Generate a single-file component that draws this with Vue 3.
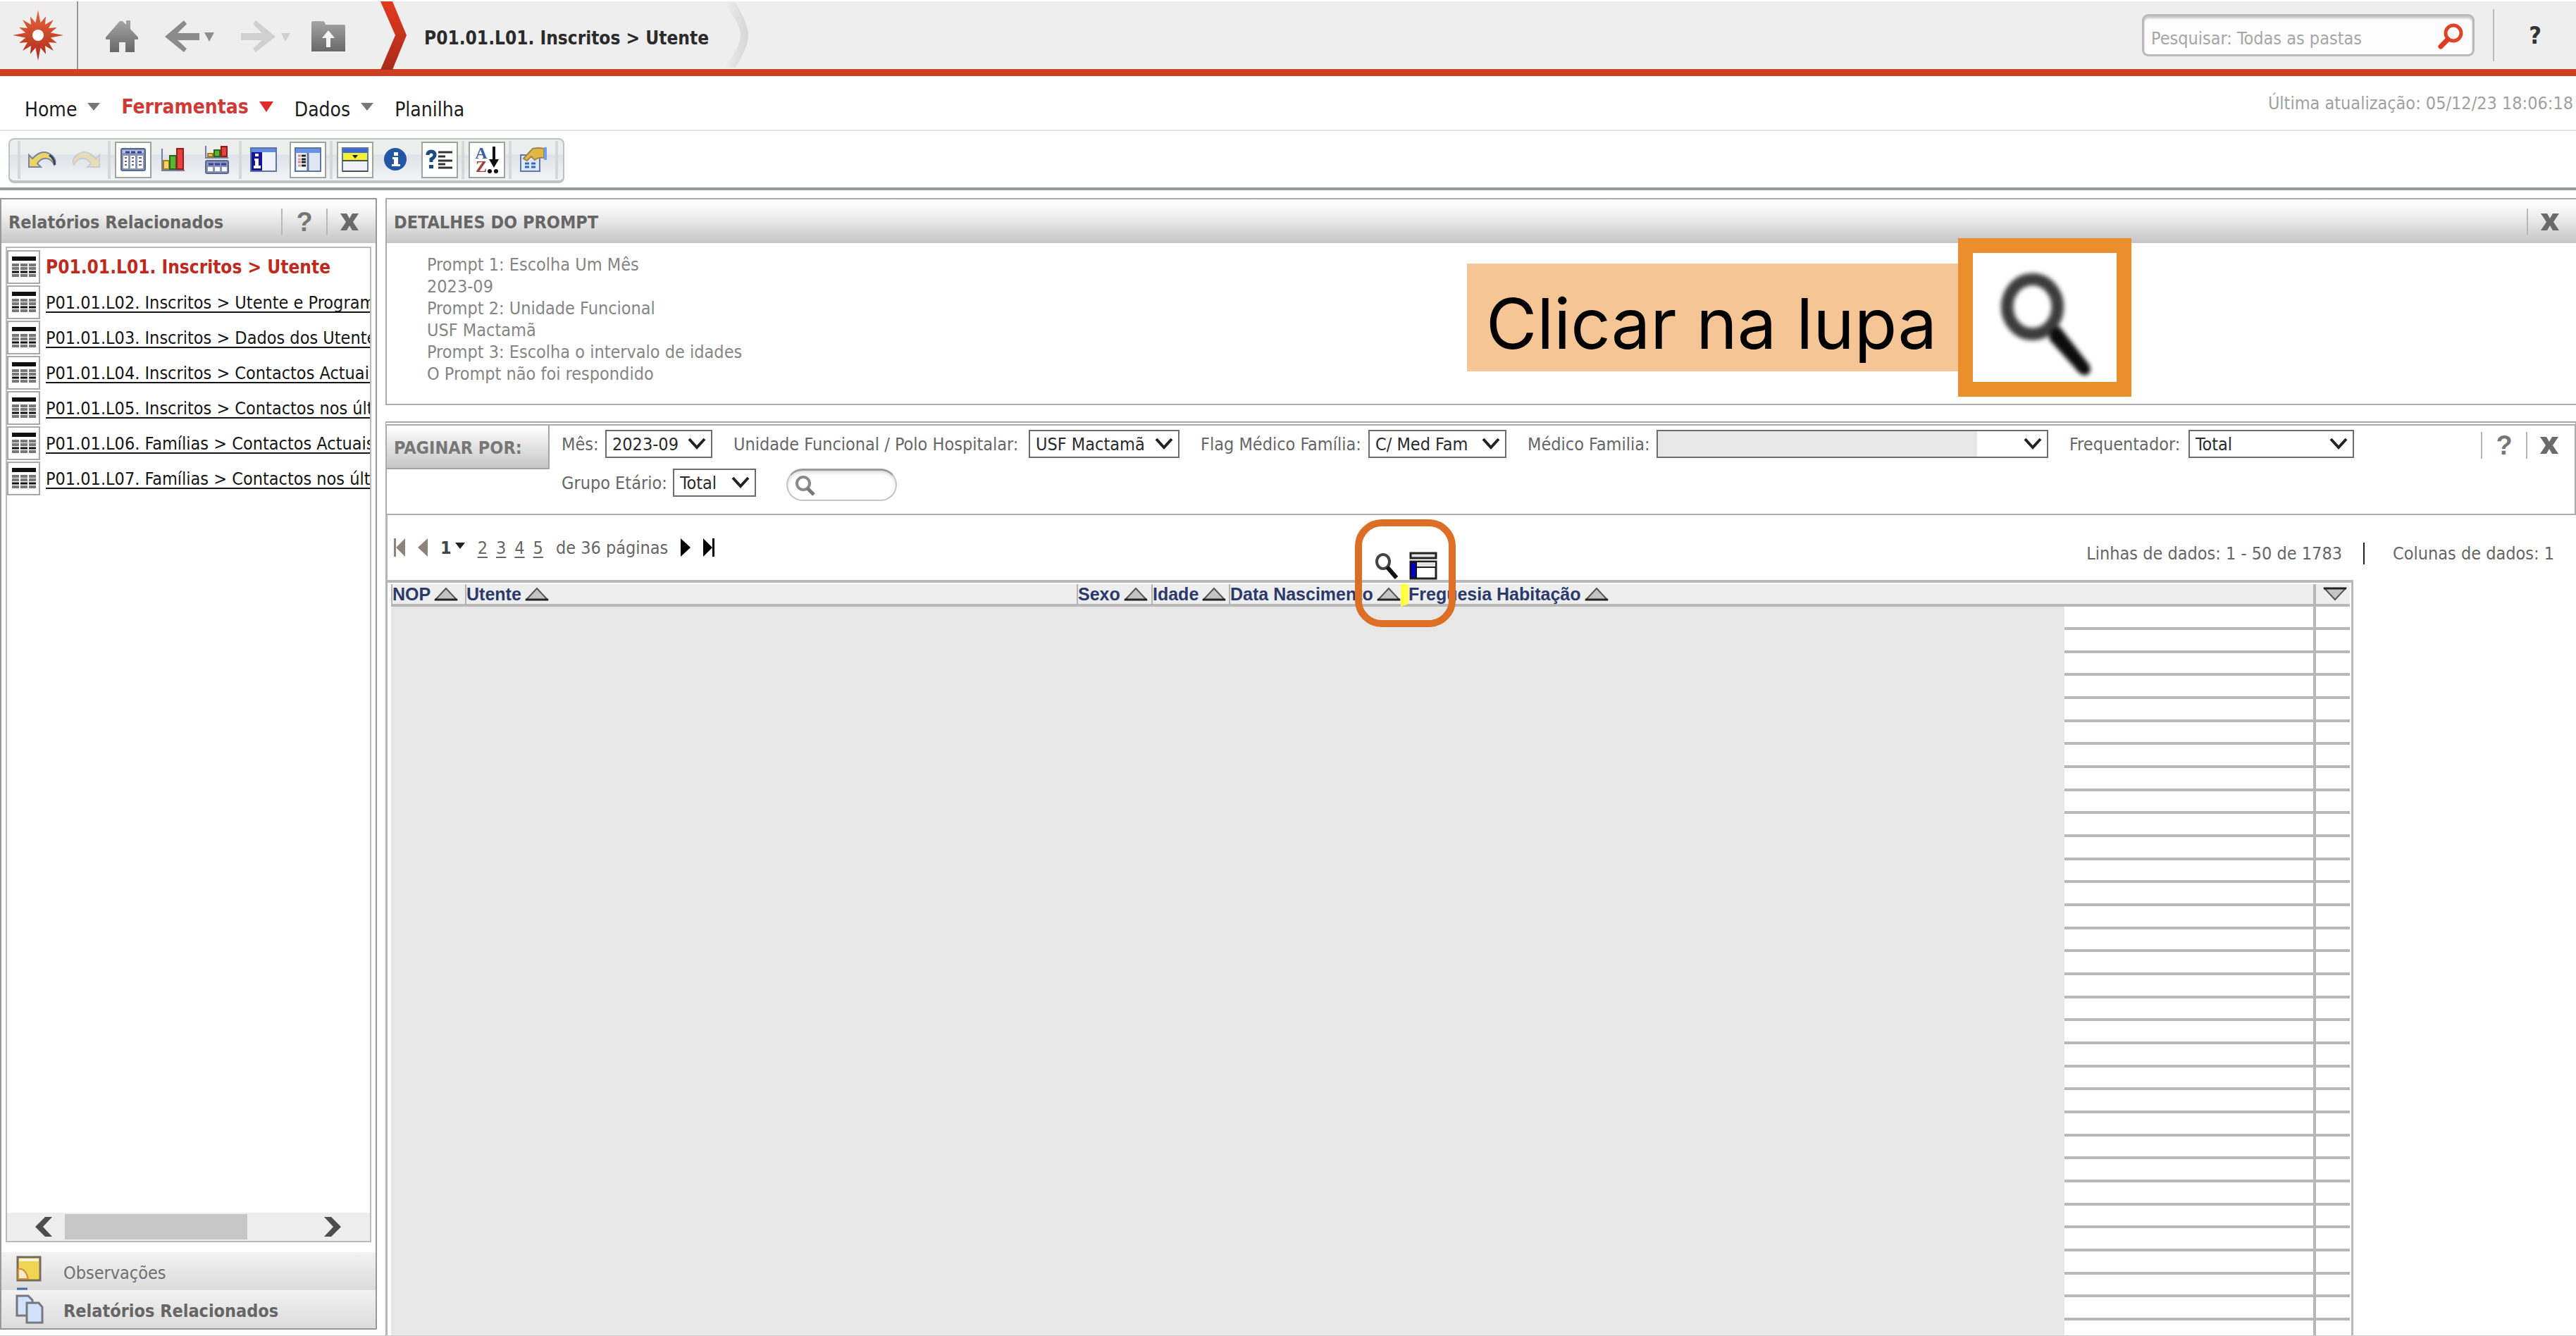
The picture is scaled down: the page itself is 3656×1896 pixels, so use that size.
<script setup>
import { ref } from 'vue'

const reports = [
  'P01.01.L01. Inscritos > Utente',
  'P01.01.L02. Inscritos > Utente e Programas',
  'P01.01.L03. Inscritos > Dados dos Utentes',
  'P01.01.L04. Inscritos > Contactos Actuais',
  'P01.01.L05. Inscritos > Contactos nos últimos',
  'P01.01.L06. Famílias > Contactos Actuais',
  'P01.01.L07. Famílias > Contactos nos últimos'
]

const prompts = [
  ['Prompt 1: Escolha Um Mês', '2023-09'],
  ['Prompt 2: Unidade Funcional', 'USF Mactamã'],
  ['Prompt 3: Escolha o intervalo de idades', 'O Prompt não foi respondido']
]

const fields = [
  { id: 'mes', label: 'Mês:', value: '2023-09', width: 152, span: 214 },
  { id: 'unidade', label: 'Unidade Funcional / Polo Hospitalar:', value: 'USF Mactamã', width: 214, span: 633 },
  { id: 'flag', label: 'Flag Médico Família:', value: 'C/ Med Fam', width: 196, span: 434 },
  { id: 'medico', label: 'Médico Familia:', value: '', width: 556, span: 739 },
  { id: 'frequentador', label: 'Frequentador:', value: 'Total', width: 235, span: 404 }
]
const ageField = { id: 'grupo', label: 'Grupo Etário:', value: 'Total', width: 118, span: 276 }

const columns = ['NOP', 'Utente', 'Sexo', 'Idade', 'Data Nascimento', 'Freguesia Habitação']
const rowCount = 32
const folderSearch = ref('')
const pageSearch = ref('')

const starPoints = Array.from({ length: 32 }, (_, i) => {
  const r = i % 2 ? 18 : i % 8 === 0 ? 36 : i % 4 === 0 ? 31 : 29
  const a = (Math.PI * i) / 16
  return `${(36 + r * Math.sin(a)).toFixed(1)},${(36 - r * Math.cos(a)).toFixed(1)}`
}).join(' ')
</script>

<template>
  <div class="page">
    <header class="topbar">
      <a class="logo" href="#" aria-label="Início">
        <svg width="72" height="72" viewBox="0 0 72 72">
          <defs>
            <linearGradient id="star" x1="0" y1="0" x2="0" y2="1">
              <stop offset="0" stop-color="#e8663a" />
              <stop offset="1" stop-color="#ab2a1c" />
            </linearGradient>
          </defs>
          <polygon :points="starPoints" fill="url(#star)" />
          <circle cx="36" cy="36" r="8" fill="#fff" />
        </svg>
      </a>
      <nav class="nav">
        <button class="plain" aria-label="Home">
          <svg width="48" height="48" viewBox="0 0 48 48">
            <defs>
              <linearGradient id="steel" x1="0" y1="0" x2="0" y2="1">
                <stop offset="0" stop-color="#a5a5a5" />
                <stop offset="1" stop-color="#686868" />
              </linearGradient>
            </defs>
            <path d="M1 25 20 3q3-3 6 0l4 4V1h6v12l11 12v3h-5v18H29V32h-9v14H7V28H1z" fill="url(#steel)" />
          </svg>
        </button>
        <button class="plain split" aria-label="Voltar">
          <svg width="72" height="48" viewBox="0 0 72 48">
            <path d="M28 1 1 24l27 22 4-5-13-12h31V19H19L32 6z" fill="#8b8b8b" />
            <path d="M57 18h14l-7 13z" fill="#8f8f8f" />
          </svg>
        </button>
        <button class="plain split" aria-label="Avançar">
          <svg width="72" height="48" viewBox="0 0 72 48">
            <path d="M22 1l28 23-28 22-4-5 13-12H1V19h30L18 6z" fill="#d0d0d0" />
            <path d="M58 19h13l-7 12z" fill="#cfcfcf" />
          </svg>
        </button>
        <button class="plain" aria-label="Pasta acima">
          <svg width="50" height="46" viewBox="0 0 50 46">
            <path d="M1 3q0-2 3-2h13q3 0 4 5h26q2 0 2 3v35H1z" fill="url(#steel)" />
            <path d="M25 14 16 25h6v13h6V25h6z" fill="#f4f4f4" />
          </svg>
        </button>
      </nav>
      <svg class="chevron" width="38" height="98" viewBox="0 0 38 98">
        <defs>
          <linearGradient id="hot" x1="0" y1="0" x2="0" y2="1">
            <stop offset="0" stop-color="#e23a1e" />
            <stop offset="1" stop-color="#a92b1b" />
          </linearGradient>
        </defs>
        <path d="M0 1h17l20 48-20 49H0l21-49z" fill="url(#hot)" />
      </svg>
      <h1>P01.01.L01. Inscritos &gt; Utente</h1>
      <svg width="36" height="94" viewBox="0 0 36 94">
        <defs>
          <linearGradient id="pale" x1="0" y1="0" x2="1" y2="0">
            <stop offset="0" stop-color="#eee" />
            <stop offset="1" stop-color="#d6d6d6" />
          </linearGradient>
        </defs>
        <path d="M0 1h17q18 30 18 46T17 93H0q24-30 24-46T0 1z" fill="url(#pale)" />
      </svg>
      <div class="search">
        <input v-model="folderSearch" type="text" placeholder="Pesquisar: Todas as pastas" aria-label="Pesquisar" />
        <button class="plain" aria-label="Procurar">
          <svg width="38" height="38" viewBox="0 0 38 38">
            <circle cx="23" cy="14" r="11" fill="none" stroke="#e04428" stroke-width="5" />
            <path d="M15 23 5 33" stroke="#de3a20" stroke-width="7" stroke-linecap="round" />
          </svg>
        </button>
      </div>
      <button class="help plain">?</button>
    </header>

    <div class="menubar">
      <nav class="menu">
        <a href="#">Home<svg width="18" height="11" viewBox="0 0 18 11"><path d="M0 0h18L9 11z" fill="#777" /></svg></a>
        <a href="#" class="active">Ferramentas<svg width="20" height="15" viewBox="0 0 20 15"><path d="M0 0h20L10 15z" fill="#e02b2b" /></svg></a>
        <a href="#">Dados<svg width="18" height="11" viewBox="0 0 18 11"><path d="M0 0h18L9 11z" fill="#777" /></svg></a>
        <a href="#">Planilha</a>
      </nav>
      <p class="updated">Última atualização: 05/12/23 18:06:18</p>
    </div>

    <div class="toolstrip">
      <div class="tools">
        <span class="bar"></span>
        <button class="tool" aria-label="Desfazer">
          <svg width="40" height="26" viewBox="0 0 40 26">
            <path d="M1 6v17h17l-5-5q6-9 14-7 6 1 10 9 4-6-3-13Q26 0 17 3 12 5 6 11z" fill="#ecd468" stroke="#7a86a0" stroke-width="2" />
            <path d="M30 6q7 5 8 14" stroke="#34455f" stroke-width="3" fill="none" />
          </svg>
        </button>
        <button class="tool" aria-label="Refazer">
          <svg width="40" height="26" viewBox="0 0 40 26" opacity=".45">
            <path d="M39 6v17H22l5-5q-6-9-14-7-6 1-10 9-4-6 3-13Q14 0 23 3q5 2 11 8z" fill="#ecd170" stroke="#a9aeb9" stroke-width="2" />
          </svg>
        </button>
        <span class="bar"></span>
        <button class="tool boxed" aria-label="Grade">
          <svg width="36" height="34" viewBox="0 0 36 34">
            <rect x="1" y="1" width="34" height="31" rx="2" fill="#8795b2" stroke="#566a91" stroke-width="2" />
            <path d="M3 3h30v4H3z" fill="#b8c3d6" />
            <path d="M7 6h6M15 6h6M24 6h6" stroke="#3b3ba5" stroke-width="3" />
            <path d="M4 11h7v18H4zM14 11h7v18h-7zM24 11h8v18h-8z" fill="#fff" />
            <path d="M6 14h3M6 19h3M6 24h3M16 14h3M16 19h3M16 24h3M26 14h4M26 19h4M26 24h4" stroke="#667" stroke-width="2" />
          </svg>
        </button>
        <button class="tool" aria-label="Gráfico">
          <svg width="36" height="34" viewBox="0 0 36 34">
            <path d="M2 1v31h32" stroke="#6f80a8" stroke-width="2" fill="none" />
            <rect x="4" y="18" width="8" height="12" fill="#f3d568" stroke="#a97b13" stroke-width="2" />
            <rect x="13" y="11" width="9" height="19" fill="#5cb336" stroke="#276a14" stroke-width="2" />
            <rect x="23" y="1" width="9" height="29" fill="#e2433c" stroke="#9c1a1a" stroke-width="2" />
          </svg>
        </button>
        <button class="tool" aria-label="Grade e gráfico">
          <svg width="36" height="42" viewBox="0 0 36 42">
            <path d="M2 1v17h32" stroke="#6f80a8" stroke-width="2" fill="none" />
            <rect x="5" y="12" width="7" height="4" fill="#f3d568" stroke="#a97b13" stroke-width="2" />
            <rect x="14" y="7" width="8" height="9" fill="#5cb336" stroke="#276a14" stroke-width="2" />
            <rect x="24" y="2" width="8" height="14" fill="#e2433c" stroke="#9c1a1a" stroke-width="2" />
            <rect x="2" y="22" width="32" height="18" rx="2" fill="#8795b2" stroke="#566a91" stroke-width="2" />
            <path d="M6 27h7M15 27h7M24 27h7" stroke="#3b3ba5" stroke-width="3" />
            <path d="M5 31h7v6H5zM15 31h7v6h-7zM25 31h7v6h-7z" fill="#fff" />
          </svg>
        </button>
        <span class="bar"></span>
        <button class="tool" aria-label="Detalhes do relatório">
          <svg width="38" height="36" viewBox="0 0 38 36">
            <rect x="1" y="1" width="36" height="33" fill="#eef2fa" stroke="#5d76a3" stroke-width="2" />
            <path d="M2 2h34v5H2z" fill="#5f8be0" />
            <path d="M2 7h15v26H2z" fill="#14149a" />
            <path d="M7 9h5v4H7zM6 16h6v10h3v4H5v-4h2v-7H6z" fill="#fff" />
          </svg>
        </button>
        <button class="tool boxed" aria-label="Lista de objetos">
          <svg width="38" height="36" viewBox="0 0 38 36">
            <rect x="1" y="1" width="36" height="33" fill="#dfe7f5" stroke="#5d76a3" stroke-width="2" />
            <path d="M2 2h34v6H2z" fill="#6b93e3" />
            <path d="M4 9h14v23H4z" fill="#fff" />
            <path d="M19 8v25" stroke="#5d76a3" stroke-width="3" />
            <path d="M5 12h4M5 21h4" stroke="#e57e7e" stroke-width="3" />
            <path d="M5 17h4M5 26h4" stroke="#c9a0a0" stroke-width="3" />
            <path d="M10 12h6M10 17h6M10 21h6M10 26h6" stroke="#222" stroke-width="3" />
          </svg>
        </button>
        <span class="bar"></span>
        <button class="tool boxed" aria-label="Paginar por">
          <svg width="38" height="36" viewBox="0 0 38 36">
            <rect x="1" y="1" width="36" height="33" fill="#eef1f8" stroke="#5d76a3" stroke-width="2" />
            <path d="M2 2h34v6H2z" fill="#3f68d4" />
            <path d="M2 8h34v10H2z" fill="#f5f032" />
            <path d="M15 11h8l-4 5z" fill="#222" />
            <path d="M1 19h36M1 34h36" stroke="#4b4f58" stroke-width="2" />
          </svg>
        </button>
        <button class="tool" aria-label="Informação">
          <svg width="36" height="36" viewBox="0 0 36 36">
            <circle cx="18" cy="17" r="16" fill="#2456a6" />
            <path d="M16 7h6v5h-6zM14 14h8v10h3v3H13v-3h3v-7h-2z" fill="#fff" />
          </svg>
        </button>
        <button class="tool boxed" aria-label="Detalhes do prompt">
          <svg width="40" height="30" viewBox="0 0 40 30">
            <path d="M3 8q0-5 5-5t5 5q0 3-5 6v4" stroke="#1b4a80" stroke-width="5" fill="none" />
            <path d="M5 22h6v5H5z" fill="#1b4a80" />
            <path d="M18 4h20M18 10h10M18 16h20M18 21h10M18 26h20" stroke="#333" stroke-width="3" />
          </svg>
        </button>
        <span class="bar"></span>
        <button class="tool boxed" aria-label="Ordenar">
          <span class="az" aria-hidden="true"><b>A</b><b>Z</b></span>
          <svg width="16" height="40" viewBox="0 0 16 40">
            <path d="M9 1v24" stroke="#111" stroke-width="4" />
            <path d="M2 19h14L9 31z" fill="#111" />
            <circle cx="3" cy="36" r="3" fill="#111" />
            <circle cx="12" cy="36" r="3" fill="#111" />
          </svg>
        </button>
        <span class="bar"></span>
        <button class="tool" aria-label="Opções do relatório">
          <svg width="40" height="36" viewBox="0 0 40 36">
            <rect x="2" y="11" width="27" height="23" fill="#dbe8fb" stroke="#5d79ad" stroke-width="2" />
            <path d="M8 23h6M17 23h6M8 28h6M17 28h6" stroke="#3d68b5" stroke-width="3" />
            <path d="M6 16 19 2q8-2 16 0v13q-9-1-13 3l-5-5-6 6z" fill="#e2b742" stroke="#a0864a" stroke-width="2" />
            <path d="M35 0h4v18h-4z" fill="#6f9df0" />
          </svg>
        </button>
        <span class="bar"></span>
      </div>
    </div>

    <div class="body">
      <aside class="sidebar">
        <div class="panel-head">
          <h2>Relatórios Relacionados</h2>
          <button class="plain mark">?</button>
          <button class="plain mark" aria-label="Fechar">
            <svg width="28" height="26" viewBox="0 0 28 26"><path d="M1 1h9l4 7 4-7h9l-8 12 8 12h-9l-4-7-4 7H1l8-12z" fill="#6a6a6a" /></svg>
          </button>
        </div>
        <div class="listbox">
          <ul>
            <li v-for="(name, i) in reports" :key="name">
              <span class="gridicon">
                <svg width="36" height="30" viewBox="0 0 36 30">
                  <path d="M1 0h34v6H1z" fill="#111" />
                  <path d="M1 12h10M13 12h10M25 12h10M1 17h10M13 17h10M25 17h10M1 27h10M13 27h10M25 27h10" stroke="#777" stroke-width="4" />
                  <path d="M1 22h10M13 22h10M25 22h10" stroke="#111" stroke-width="3" />
                </svg>
              </span>
              <a href="#" :class="{ current: i === 0 }">{{ name }}</a>
            </li>
          </ul>
          <div class="hscroll">
            <button class="plain" aria-label="Rolar à esquerda">
              <svg width="24" height="28" viewBox="0 0 24 28"><path d="M14 0h10L11 14l13 14H14L0 14z" fill="#4d4d4d" /></svg>
            </button>
            <span class="track"><span class="thumb"></span></span>
            <button class="plain" aria-label="Rolar à direita">
              <svg width="24" height="28" viewBox="0 0 24 28"><path d="M10 0H0l13 14L0 28h10l14-14z" fill="#4d4d4d" /></svg>
            </button>
          </div>
        </div>
        <button class="drawer">
          <svg width="40" height="54" viewBox="0 0 40 54">
            <rect x="3" y="7" width="32" height="33" fill="#f0d552" stroke="#766c5c" stroke-width="3" />
            <path d="M5 9h28v4H5z" fill="#fbf6da" />
            <path d="M4 24q10-2 14 14H4z" fill="#f8ecc8" stroke="#d78b38" stroke-width="2" />
            <path d="M2 52h15" stroke="#3f6fae" stroke-width="3" />
          </svg>
          <span>Observações</span>
        </button>
        <button class="drawer open">
          <svg width="40" height="42" viewBox="0 0 40 42">
            <path d="M2 2h16l6 6v22H2z" fill="#d2e2fb" stroke="#77797e" stroke-width="3" />
            <path d="M16 12h17l5 6v22H16z" fill="#d2e2fb" stroke="#77797e" stroke-width="3" />
          </svg>
          <span>Relatórios Relacionados</span>
        </button>
      </aside>

      <main class="main">
        <section class="prompt-panel">
          <div class="panel-head">
            <h2>DETALHES DO PROMPT</h2>
            <button class="plain mark" aria-label="Fechar">
              <svg width="28" height="26" viewBox="0 0 28 26"><path d="M1 1h9l4 7 4-7h9l-8 12 8 12h-9l-4-7-4 7H1l8-12z" fill="#6a6a6a" /></svg>
            </button>
          </div>
          <dl>
            <template v-for="p in prompts" :key="p[0]">
              <dt>{{ p[0] }}</dt>
              <dd>{{ p[1] }}</dd>
            </template>
          </dl>
          <div class="callout">
            <p>Clicar na lupa</p>
            <div class="lens">
              <svg width="140" height="164" viewBox="0 0 136 160">
                <ellipse cx="51" cy="53" rx="35" ry="38" fill="none" stroke="#3c3c3c" stroke-width="17" />
                <path d="M76 86l12-6 42 54q4 12-6 14-8-1-13-9L74 98z" fill="#0c0c0c" />
              </svg>
            </div>
          </div>
        </section>

        <section class="pageby">
          <h2>PAGINAR POR:</h2>
          <div class="fields">
            <div class="line">
              <div v-for="f in fields" :key="f.id" class="field" :style="{ width: f.span + 'px' }">
                <label :for="f.id">{{ f.label }}</label>
                <span class="select" :class="{ masked: !f.value }" :style="{ width: f.width + 'px' }">
                  <select :id="f.id"><option>{{ f.value }}</option></select>
                  <svg width="26" height="18" viewBox="0 0 26 18"><path d="M2 2l11 12L24 2" fill="none" stroke="#222" stroke-width="4" /></svg>
                </span>
              </div>
            </div>
            <div class="line">
              <div class="field" :style="{ width: ageField.span + 'px' }">
                <label :for="ageField.id">{{ ageField.label }}</label>
                <span class="select" :style="{ width: ageField.width + 'px' }">
                  <select :id="ageField.id"><option>{{ ageField.value }}</option></select>
                  <svg width="26" height="18" viewBox="0 0 26 18"><path d="M2 2l11 12L24 2" fill="none" stroke="#222" stroke-width="4" /></svg>
                </span>
              </div>
              <div class="pill">
                <svg width="30" height="30" viewBox="0 0 30 30">
                  <circle cx="12" cy="12" r="9" fill="none" stroke="#8a8a8a" stroke-width="4" />
                  <path d="M18 19l9 9" stroke="#777" stroke-width="5" />
                </svg>
                <input v-model="pageSearch" type="text" aria-label="Procurar elemento" />
              </div>
            </div>
          </div>
          <div class="marks">
            <button class="plain mark">?</button>
            <button class="plain mark" aria-label="Fechar">
              <svg width="28" height="26" viewBox="0 0 28 26"><path d="M1 1h9l4 7 4-7h9l-8 12 8 12h-9l-4-7-4 7H1l8-12z" fill="#6a6a6a" /></svg>
            </button>
          </div>
        </section>

        <section class="results">
          <div class="pager">
            <div class="pages">
              <button class="plain" aria-label="Primeira página">
                <svg width="16" height="26" viewBox="0 0 16 26"><path d="M0 0h3v26H0zM16 0v26L3 13z" fill="#8c847c" /></svg>
              </button>
              <button class="plain" aria-label="Página anterior">
                <svg width="14" height="26" viewBox="0 0 14 26"><path d="M14 0v26L0 13z" fill="#8c847c" /></svg>
              </button>
              <button class="plain now">1<svg width="14" height="9" viewBox="0 0 14 9"><path d="M0 0h14L7 9z" fill="#222" /></svg></button>
              <span class="numbers"><a v-for="n in [2, 3, 4, 5]" :key="n" href="#">{{ n }}</a></span>
              <span class="total">de 36 páginas</span>
              <button class="plain" aria-label="Página seguinte">
                <svg width="14" height="26" viewBox="0 0 14 26"><path d="M0 0v26l14-13z" fill="#000" /></svg>
              </button>
              <button class="plain" aria-label="Última página">
                <svg width="16" height="26" viewBox="0 0 16 26"><path d="M13 0h3v26h-3zM0 0v26l13-13z" fill="#000" /></svg>
              </button>
            </div>
            <p class="counts"><span>Linhas de dados: 1 - 50 de 1783</span><span>Colunas de dados: 1</span></p>
          </div>

          <div class="gridwrap">
            <table>
              <colgroup>
                <col class="c-nop" /><col class="c-utente" /><col class="c-sexo" /><col class="c-idade" />
                <col class="c-data" /><col class="c-freg" /><col /><col class="c-menu" />
              </colgroup>
              <thead>
                <tr>
                  <th v-for="(c, i) in columns" :key="c" :colspan="i === 5 ? 2 : 1" :class="{ drop: i === 5 }">
                    <button class="plain sort">{{ c }}<svg width="34" height="20" viewBox="0 0 34 20"><path d="M2 18 17 2l15 16z" fill="#c4c4c4" stroke="#555" stroke-width="2" /><path d="M1 18h32" stroke="#222" stroke-width="3" /></svg></button>
                  </th>
                  <th class="menu-col">
                    <button class="plain sort" aria-label="Ordenar"><svg width="34" height="20" viewBox="0 0 34 20"><path d="M2 2l15 16L32 2z" fill="#c4c4c4" stroke="#555" stroke-width="2" /><path d="M1 2h32" stroke="#222" stroke-width="3" /></svg></button>
                  </th>
                </tr>
              </thead>
              <tbody>
                <tr v-for="r in rowCount" :key="r">
                  <td v-if="r === 1" class="mask" colspan="6" :rowspan="rowCount"></td>
                  <td></td>
                  <td></td>
                </tr>
              </tbody>
            </table>
            <div class="floating">
              <svg width="34" height="38" viewBox="0 0 34 38">
                <ellipse cx="12" cy="12" rx="9" ry="10" fill="none" stroke="#444" stroke-width="4" />
                <path d="M18 20l13 15" stroke="#111" stroke-width="6" />
              </svg>
              <svg width="40" height="40" viewBox="0 0 40 40">
                <rect x="2" y="2" width="36" height="7" fill="#e4e4e4" stroke="#222" stroke-width="3" />
                <rect x="2" y="14" width="36" height="24" fill="#fff" stroke="#222" stroke-width="3" />
                <path d="M10 15h27v6H10z" fill="#e4e4e4" />
                <path d="M10 22h28" stroke="#222" stroke-width="2" />
                <path d="M2 15h8v22H2z" fill="#0000d0" stroke="#111" stroke-width="2" />
              </svg>
            </div>
            <div class="ring"></div>
          </div>
        </section>
      </main>
    </div>
  </div>
</template>

<style>
body {
  margin: 0;
  background: #fff;
}
</style>

<style scoped>
* {
  box-sizing: border-box;
}
.page {
  display: flex;
  flex-direction: column;
  height: 100vh;
  overflow: hidden;
  padding-top: 2px;
  border-bottom: 1px solid #ccc;
  font-family: "DejaVu Sans Condensed", "Noto Sans", sans-serif;
  font-size: 25px;
  line-height: 31px;
  color: #666;
  background: #fff;
}
h1, h2, p, ul, dl, dd {
  margin: 0;
  padding: 0;
}
svg {
  display: block;
  flex: none;
}
button, input, select {
  font: inherit;
  color: inherit;
}
.plain {
  display: flex;
  align-items: center;
  padding: 0;
  border: 0;
  background: none;
}

/* top bar */
.topbar {
  display: flex;
  align-items: center;
  flex: none;
  height: 106px;
  background: #eee;
  border-bottom: 10px solid #ce4120;
}
.logo {
  display: flex;
  align-items: center;
  width: 111px;
  height: 96px;
  padding-left: 18px;
  border-right: 2px solid #999;
}
.nav {
  display: flex;
  align-items: center;
  gap: 28px;
  padding: 4px 0 0 38px;
}
.split {
  margin-left: 8px;
}
.chevron {
  margin-left: 49px;
}
h1 {
  padding: 8px 21px 0 24px;
  font-size: 26px;
  color: #2b2b2b;
}
.search {
  display: flex;
  align-items: center;
  width: 472px;
  height: 60px;
  margin-left: auto;
  padding: 4px 12px 0 10px;
  border: 3px solid #b9b9b9;
  border-radius: 9px;
  background: #fcfcfc;
  box-shadow: inset 0 3px 3px #c4c4c4;
}
.search input {
  flex: 1;
  min-width: 0;
  padding: 4px 0 0;
  border: 0;
  background: none;
}
.search input::placeholder {
  color: #a6a6a6;
  opacity: 1;
}
.help {
  justify-content: center;
  width: 118px;
  height: 74px;
  margin-left: 26px;
  border-left: 2px solid #bbb;
  font-size: 34px;
  font-weight: bold;
  color: #333;
}

/* menu */
.menubar {
  display: flex;
  justify-content: space-between;
  flex: none;
  height: 78px;
  padding: 0 4px 0 35px;
  border-bottom: 2px solid #e2e2e2;
}
.menu {
  display: flex;
  align-items: center;
  gap: 30px;
  padding-top: 18px;
  font-size: 28px;
}
.menu a {
  display: flex;
  align-items: center;
  gap: 15px;
  color: #1c1c1c;
  text-decoration: none;
}
.menu a svg {
  margin-bottom: 8px;
}
.menu .active {
  padding-bottom: 8px;
  font-weight: bold;
  color: #d03a35;
}
.menu .active svg {
  margin-bottom: 0;
}
.updated {
  padding-top: 23px;
  color: #a0a0a0;
}

/* toolbar */
.toolstrip {
  display: flex;
  flex: none;
  height: 84px;
  padding: 10px 0 0 12px;
  border-bottom: 4px solid #989a9a;
}
.tools {
  display: flex;
  align-items: center;
  height: 64px;
  padding: 0 7px 0 11px;
  border: 2px solid #bfc2c3;
  border-bottom-width: 4px;
  border-radius: 8px;
  background: linear-gradient(#eceeed 0 36%, #dfe1e8 38%, #f0f1f4 90%);
}
.bar {
  width: 4px;
  height: 54px;
  background: #d6d7d7;
}
.tool {
  display: flex;
  align-items: center;
  justify-content: center;
  width: 62px;
  height: 52px;
  padding: 0;
  border: 0;
  background: none;
}
.tool.boxed {
  width: 52px;
  margin-left: 6px;
  border: 2px solid #a3a39d;
  background: #fff;
}
.boxed + .bar {
  margin-left: 5px;
}
.az {
  display: flex;
  flex-direction: column;
  font: bold 24px/19px "Liberation Serif", serif;
}
.az b:first-child {
  color: #3b5c9e;
}
.az b:last-child {
  color: #9a3f38;
}

/* panels */
.body {
  display: flex;
  flex: 1;
  min-height: 0;
  padding-top: 11px;
}
.panel-head {
  display: flex;
  align-items: center;
  flex: none;
  height: 62px;
  padding: 2px 6px 0 10px;
  background: linear-gradient(#fff, #f0f0f0 35%, #c6c6c6);
}
h2 {
  font-size: 25px;
  color: #666;
}
.panel-head h2 {
  margin-right: auto;
}
.mark {
  justify-content: center;
  width: 64px;
  height: 38px;
  border-left: 2px solid #b8b8b8;
  font-family: "Liberation Sans", sans-serif;
  font-size: 38px;
  font-weight: bold;
  color: #777;
}

/* sidebar */
.sidebar {
  display: flex;
  flex-direction: column;
  flex: none;
  width: 535px;
  margin-bottom: 8px;
  border: 2px solid #999;
}
.listbox {
  display: flex;
  flex-direction: column;
  flex: 1;
  min-height: 0;
  margin: 5px 6px 14px;
  border: 2px solid #bbb;
}
ul {
  flex: 1;
  overflow: hidden;
  padding-top: 2px;
  list-style: none;
}
li {
  display: flex;
  align-items: center;
  gap: 8px;
  height: 50px;
  white-space: nowrap;
}
.gridicon {
  display: flex;
  align-items: center;
  justify-content: center;
  flex: none;
  width: 47px;
  height: 48px;
  border: 2px solid #a8a8a8;
}
li a {
  color: #151515;
  text-underline-offset: 4px;
  text-decoration-skip-ink: none;
}
li a.current {
  color: #bf2a20;
  font-size: 26px;
  font-weight: bold;
  text-decoration: none;
}
.hscroll {
  display: flex;
  align-items: center;
  height: 40px;
  padding: 0 41px 0 40px;
  background: #ededed;
}
.track {
  flex: 1;
  padding: 0 18px;
}
.thumb {
  display: block;
  width: 74%;
  height: 36px;
  background: #c6c6c6;
}
.drawer {
  display: flex;
  align-items: center;
  gap: 28px;
  height: 54px;
  padding: 0 0 0 20px;
  border: 0;
  background: linear-gradient(#f2f2f2, #dcdcdc);
  color: #707070;
}
.drawer span {
  padding-top: 5px;
}
.drawer.open {
  font-weight: bold;
  color: #666;
}

/* main column */
.main {
  flex: 1;
  min-width: 0;
  display: flex;
  flex-direction: column;
  margin-left: 12px;
}
.prompt-panel {
  position: relative;
  flex: none;
  border: 2px solid #acacac;
  border-right: 0;
}
dl {
  padding: 15px 0 27px 57px;
  color: #858585;
}
.callout {
  position: absolute;
  top: 55px;
  right: 631px;
  display: flex;
  align-items: center;
}
.callout p {
  padding: 18px 30px 0 27px;
  font: 99px/135px Inter, "Liberation Sans", sans-serif;
  color: #000;
  background: #f6c595;
}
.lens {
  display: flex;
  align-items: center;
  justify-content: center;
  width: 246px;
  height: 225px;
  padding-top: 24px;
  border: 21px solid #eb8f2d;
  background: #fff;
}
.lens svg {
  filter: blur(3px);
}
.pageby {
  display: flex;
  align-items: flex-start;
  flex: none;
  height: 133px;
  margin-top: 23px;
  border: 2px solid #acacac;
  border-top: 6px double #acacac;
}
.pageby h2 {
  flex: none;
  width: 231px;
  padding: 16px 0 13px 10px;
  border: solid #a5a5a5;
  border-width: 0 2px 2px 0;
  background: linear-gradient(#fff, #c6c6c6);
  color: #777;
}
.fields {
  display: flex;
  flex-direction: column;
  gap: 15px;
  padding: 6px 0 0 17px;
}
.line {
  display: flex;
  gap: 30px;
  height: 40px;
}
.field {
  display: flex;
  align-items: center;
  justify-content: space-between;
  white-space: nowrap;
}
.select {
  position: relative;
  flex: none;
  height: 40px;
}
.select select {
  appearance: none;
  width: 100%;
  height: 40px;
  padding: 0 0 0 8px;
  border: 2px solid #6c6c6c;
  border-radius: 0;
  background: #fff;
  color: #2a2a2a;
}
.select svg {
  position: absolute;
  right: 9px;
  top: 11px;
  pointer-events: none;
}
.masked select {
  background: linear-gradient(90deg, #e7e7e7 0 82%, #fff 82%);
}
.pill {
  display: flex;
  align-items: center;
  width: 157px;
  height: 46px;
  margin-left: 13px;
  padding: 0 12px 0 10px;
  border: 2px solid #c4c4c4;
  border-top: 3px solid #999;
  border-radius: 23px;
  box-shadow: inset 0 3px 4px #ddd;
}
.pill input {
  width: 100px;
  border: 0;
  background: none;
}
.marks {
  display: flex;
  margin: 9px 5px 0 auto;
}

/* results */
.results {
  flex: 1;
  min-height: 0;
  display: flex;
  flex-direction: column;
  border-left: 3px solid #b4b4b4;
}
.pager {
  display: flex;
  align-items: center;
  justify-content: space-between;
  flex: none;
  height: 92px;
  padding: 0 31px 0 9px;
}
.pages {
  display: flex;
  align-items: center;
  gap: 18px;
}
.now {
  gap: 5px;
  font-weight: bold;
  color: #444;
}
.now svg {
  margin-bottom: 6px;
}
.numbers {
  display: flex;
  gap: 12px;
}
.numbers a {
  color: #666;
  text-underline-offset: 4px;
}
.counts {
  display: flex;
  align-items: center;
  padding-top: 16px;
}
.counts span + span {
  margin-left: 30px;
  padding-left: 40px;
  border-left: 2px solid #222;
}
.gridwrap {
  position: relative;
  flex: 1;
  min-height: 0;
  margin-right: 316px;
  padding: 2px 2px 0 5px;
  border: solid #b8b8b8;
  border-width: 4px 3px 0 0;
}
table {
  width: 100%;
  border-collapse: separate;
  border-spacing: 0;
  table-layout: fixed;
}
.c-nop { width: 105px; }
.c-utente { width: 868px; }
.c-sexo { width: 106px; }
.c-idade { width: 110px; }
.c-data { width: 244px; }
.c-freg { width: 942px; }
.c-menu { width: 52px; }
th {
  height: 32px;
  padding: 0;
  border-bottom: 4px solid #b8b8b8;
  border-left: 2px solid #b4b4b4;
  background: #eee;
  text-align: left;
  font: bold 25px/28px "Liberation Sans", sans-serif;
  color: #2b3a6b;
}
.sort {
  gap: 5px;
  line-height: 28px;
  white-space: nowrap;
}
th.drop {
  border-left: 11px solid #ff4;
}
th.menu-col {
  padding-left: 10px;
  border-left: 4px solid #b8b8b8;
}
td {
  height: 33px;
  padding: 0;
  border-bottom: 4px solid #b8b8b8;
}
tr:nth-child(3n) td:not(.mask) {
  height: 32px;
}
td:last-child {
  border-left: 4px solid #b8b8b8;
}
td.mask {
  border: 0;
  background: #e7e7e7;
}
.floating {
  position: absolute;
  left: 1401px;
  top: -44px;
  display: flex;
  align-items: flex-end;
  gap: 15px;
}
.ring {
  position: absolute;
  left: 1373px;
  top: -90px;
  width: 143px;
  height: 153px;
  border: 10px solid #dc6f25;
  border-radius: 38px;
}
</style>
